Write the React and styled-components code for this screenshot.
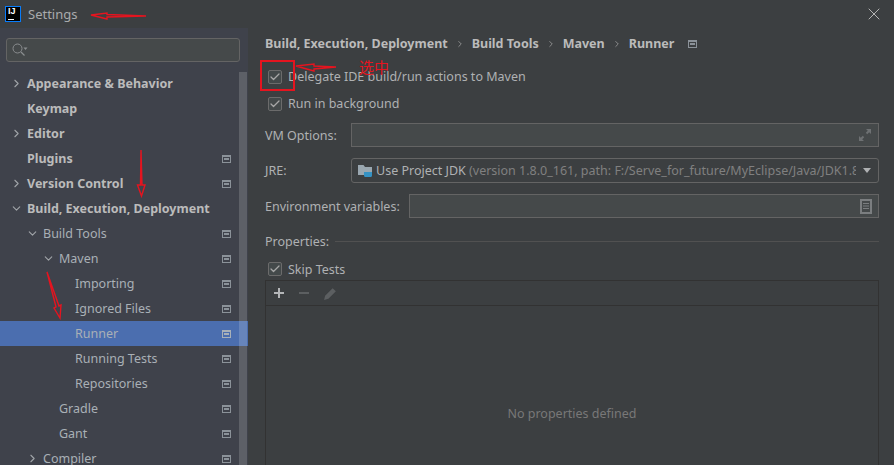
import React from 'react'
import styled, { createGlobalStyle } from 'styled-components'
import { Check, ChevronDown, ChevronRight, X } from 'lucide-react'

const Global = createGlobalStyle`
html, body { margin: 0; padding: 0; height: 100%; overflow: hidden; background: #3c3f41; }
#root { height: 100%; }
* { box-sizing: border-box; }
`

const Window = styled.div`
position: relative;
width: 894px;
height: 465px;
overflow: hidden;
display: flex;
flex-direction: column;
background: #3c3f41;
color: #bbbbbb;
font-family: "Noto Sans", "Open Sans", sans-serif;
font-size: 12.5px;
`

const TitleBar = styled.div`
height: 28px;
flex: none;
display: flex;
align-items: center;
padding: 0 10px 0 5px;
gap: 7px;
`

const AppIcon = styled.div`
width: 16px;
height: 16px;
background: #000;
border: 1px solid #087cfa;
color: #fff;
font: bold 9px/9px "Liberation Sans", sans-serif;
padding: 0 0 0 2px;
position: relative;
&::after {
  content: '';
  position: absolute;
  left: 2px;
  bottom: 1px;
  width: 6px;
  height: 1px;
  background: #fff;
}
`

const Title = styled.span`
color: #a9abad;
flex: 1;
font-size: 13px;
`

const Body = styled.div`
flex: 1;
display: flex;
min-height: 0;
`

const Sidebar = styled.aside`
position: relative;
width: 248px;
flex: none;
background: #3f424b;
padding-top: 10px;
overflow: hidden;
`

const Search = styled.div`
height: 24px;
margin: 0 8px 9px 6px;
background: #45494a;
border: 1px solid #646464;
border-radius: 3px;
display: flex;
align-items: center;
padding-left: 5px;
`

const Scrollbar = styled.div`
position: absolute;
right: 1px;
top: 44px;
bottom: 0;
width: 8px;
background: rgba(255, 255, 255, 0.16);
`

const Row = styled.div`
height: 25px;
display: flex;
align-items: center;
position: relative;
padding-left: ${p => 27 + p.$level * 16}px;
background: ${p => (p.$selected ? '#4b6eaf' : 'transparent')};
font-weight: ${p => (p.$bold ? 700 : 400)};
color: ${p => (p.$bold ? '#bbbbbb' : '#a9b0b6')};
white-space: nowrap;
`

const Arrow = styled.span`
position: absolute;
left: ${p => 10 + p.$level * 16}px;
top: 6px;
height: 13px;
color: #a0a4a8;
`

const ProjectIcon = styled.span`
position: absolute;
right: 17px;
top: 50%;
margin-top: -4px;
width: 9px;
height: 8px;
border: 1px solid ${p => (p.$light ? '#a8b0b8' : '#8b9299')};
border-top-width: 2px;
&::after {
  content: '';
  position: absolute;
  left: 1px;
  right: 1px;
  top: 1px;
  height: 2px;
  background: ${p => (p.$light ? '#a8b0b8' : '#8b9299')};
}
`

const Content = styled.main`
flex: 1;
min-width: 0;
padding: 7px 15px 0 17px;
display: flex;
flex-direction: column;
overflow: hidden;
`

const Breadcrumb = styled.div`
display: flex;
align-items: center;
height: 18px;
font-weight: 700;
color: #bbbbbb;
gap: 7px;
margin-bottom: 11px;
`

const CrumbIcon = styled.span`
position: relative;
width: 9px;
height: 8px;
margin-left: 7px;
border: 1px solid #8b9299;
border-top-width: 2px;
&::after {
  content: '';
  position: absolute;
  left: 1px;
  right: 1px;
  top: 1px;
  height: 2px;
  background: #8b9299;
}
`

const CheckRow = styled.label`
display: flex;
align-items: center;
height: ${p => p.$height || 27}px;
margin-top: ${p => p.$top || 0}px;
flex: none;
gap: 6px;
padding-left: 3px;
color: #afb1b3;
`

const Box = styled.span`
width: 14px;
height: 14px;
border: 1px solid #6b6b6b;
border-radius: 2px;
background: #43494a;
display: flex;
align-items: center;
justify-content: center;
color: #a7a7a7;
`

const FormRow = styled.div`
display: grid;
grid-template-columns: ${p => p.$label}px 1fr;
align-items: center;
margin-top: ${p => p.$top}px;
color: #afb1b3;
`

const Field = styled.div`
height: 24px;
background: #45494a;
border: 1px solid #646464;
display: flex;
align-items: center;
justify-content: flex-end;
padding-right: 6px;
`

const Combo = styled.div`
height: 25px;
border: 1px solid #646464;
border-radius: 3px;
background: #3c3f41;
display: flex;
align-items: center;
padding: 0 6px;
overflow: hidden;
`

const ComboText = styled.span`
flex: 1;
min-width: 0;
overflow: hidden;
white-space: nowrap;
margin-left: 3px;
color: #afb1b3;
`

const Muted = styled.span`
color: #808080;
`

const Caret = styled.span`
flex: none;
width: 0;
height: 0;
margin: 0 1px 0 7px;
border-left: 4px solid transparent;
border-right: 4px solid transparent;
border-top: 5px solid #afb1b3;
`

const Section = styled.div`
display: flex;
align-items: center;
gap: 6px;
margin-top: 15px;
height: 18px;
color: #afb1b3;
&::after {
  content: '';
  flex: 1;
  height: 1px;
  background: #515151;
}
`

const Table = styled.div`
flex: none;
height: 241px;
border: 1px solid #323232;
display: flex;
flex-direction: column;
`

const Toolbar = styled.div`
height: 25px;
flex: none;
display: flex;
align-items: center;
gap: 13px;
padding-left: 7px;
border-bottom: 1px solid #323232;
`

const Empty = styled.div`
flex: 1;
display: flex;
align-items: center;
justify-content: center;
color: #787878;
`

const Overlay = styled.svg`
position: absolute;
left: 0;
top: 0;
pointer-events: none;
`

const Selected = styled.div`
position: absolute;
left: 260px;
top: 60px;
width: 35px;
height: 31px;
border: 2px solid #e5141f;
`

const Note = styled.span`
position: absolute;
left: 359px;
top: 58px;
font: 15px/18px "Noto Sans CJK SC", sans-serif;
color: #e5141f;
`

const tree = [
  { label: 'Appearance & Behavior', bold: true, arrow: 'right' },
  { label: 'Keymap', bold: true },
  { label: 'Editor', bold: true, arrow: 'right' },
  { label: 'Plugins', bold: true, icon: true },
  { label: 'Version Control', bold: true, arrow: 'right', icon: true },
  { label: 'Build, Execution, Deployment', bold: true, arrow: 'down' },
  { label: 'Build Tools', level: 1, arrow: 'down', icon: true },
  { label: 'Maven', level: 2, arrow: 'down', icon: true },
  { label: 'Importing', level: 3, icon: true },
  { label: 'Ignored Files', level: 3, icon: true },
  { label: 'Runner', level: 3, icon: true, selected: true },
  { label: 'Running Tests', level: 3, icon: true },
  { label: 'Repositories', level: 3, icon: true },
  { label: 'Gradle', level: 2, icon: true },
  { label: 'Gant', level: 2, icon: true },
  { label: 'Compiler', level: 1, arrow: 'right', icon: true },
]

const TreeRow = ({ label, bold, arrow, icon, selected, level = 0 }) => (
  <Row $level={level} $bold={bold} $selected={selected}>
    {arrow && (
      <Arrow $level={level}>
        {arrow === 'right' ? <ChevronRight size={13} /> : <ChevronDown size={13} />}
      </Arrow>
    )}
    {label}
    {icon && <ProjectIcon $light={selected} />}
  </Row>
)

const CheckItem = ({ children, height, top }) => (
  <CheckRow $height={height} $top={top}>
    <Box><Check size={12} strokeWidth={2.5} /></Box>
    {children}
  </CheckRow>
)

const App = () => (
  <Window>
    <Global />
    <TitleBar>
      <AppIcon>IJ</AppIcon>
      <Title>Settings</Title>
      <X size={20} strokeWidth={1.2} color="#b5b5b5" />
    </TitleBar>
    <Body>
      <Sidebar>
        <Search>
          <svg width="16" height="14" viewBox="0 0 16 14" fill="none">
            <circle cx="5.5" cy="5.5" r="4.5" stroke="#8a8d8f" />
            <path d="M9 9l3.5 3.5" stroke="#8a8d8f" strokeWidth="1.2" />
            <path d="M11.5 4.5h4l-2 2.5z" fill="#8a8d8f" />
          </svg>
        </Search>
        {tree.map(item => <TreeRow key={item.label} {...item} />)}
        <Scrollbar />
      </Sidebar>
      <Content>
        <Breadcrumb>
          <span>Build, Execution, Deployment</span>
          <ChevronRight size={10} color="#9a9a9a" />
          <span>Build Tools</span>
          <ChevronRight size={10} color="#9a9a9a" />
          <span>Maven</span>
          <ChevronRight size={10} color="#9a9a9a" />
          <span>Runner</span>
          <CrumbIcon />
        </Breadcrumb>
        <CheckItem>Delegate IDE build/run actions to Maven</CheckItem>
        <CheckItem>Run in background</CheckItem>
        <FormRow $label={86} $top={6}>
          <span>VM Options:</span>
          <Field>
            <svg width="14" height="14" viewBox="0 0 14 14" fill="#6e7173">
              <path d="M8 1h5v5l-1.8-1.8-2 2-1.4-1.4 2-2zM6 13H1V8l1.8 1.8 2-2 1.4 1.4-2 2z" />
            </svg>
          </Field>
        </FormRow>
        <FormRow $label={86} $top={11}>
          <span>JRE:</span>
          <Combo>
            <svg width="15" height="14" viewBox="0 0 15 14" style={{ flex: 'none' }}>
              <path d="M0 1h5.5l1.5 2h7v8H0z" fill="#9aa7b0" />
              <path d="M6 8h8v3.5a1.5 1.5 0 0 1-1.5 1.5h-5A1.5 1.5 0 0 1 6 11.5z" fill="#3592c4" />
            </svg>
            <ComboText>
              Use Project JDK <Muted>(version 1.8.0_161, path: F:/Serve_for_future/MyEclipse/Java/JDK1.8.0_161)</Muted>
            </ComboText>
            <Caret />
          </Combo>
        </FormRow>
        <FormRow $label={144} $top={11}>
          <span>Environment variables:</span>
          <Field>
            <svg width="12" height="15" viewBox="0 0 12 15" fill="none">
              <rect x="1" y="1" width="10" height="13" stroke="#7b7e80" strokeWidth="2" />
              <path d="M3 4.5h6M3 7h6M3 9.5h6" stroke="#7b7e80" />
            </svg>
          </Field>
        </FormRow>
        <Section>Properties:</Section>
        <CheckItem height={22} top={8}>Skip Tests</CheckItem>
        <Table>
          <Toolbar>
            <svg width="12" height="12" viewBox="0 0 12 12">
              <path d="M5 1h2v4h4v2H7v4H5V7H1V5h4z" fill="#b4b6b8" />
            </svg>
            <svg width="12" height="12" viewBox="0 0 12 12">
              <path d="M1 5h10v2H1z" fill="#5c5f61" />
            </svg>
            <svg width="15" height="15" viewBox="0 0 14 14">
              <path d="M1 13l1-4 7-7 3 3-7 7z" fill="#5c5f61" />
            </svg>
          </Toolbar>
          <Empty>No properties defined</Empty>
        </Table>
      </Content>
    </Body>

    <Overlay width="894" height="465" viewBox="0 0 894 465" fill="none" stroke="#e5141f">
      <path d="M146 16L107 14.5V13L91 15l16 4v-2z" strokeWidth="1.4" />
      <path d="M141 150l1 35h3l-3.5 11-4-11h3z" strokeWidth="1.4" />
      <path d="M47 272l12 34 2-1-1 13-6-10 2-1z" strokeWidth="1.4" />
      <path d="M336 67l-22-1v-2L296 66l18 5v-2z" strokeWidth="1.4" />
    </Overlay>
    <Selected />
    <Note>选中</Note>
  </Window>
)

export default App
